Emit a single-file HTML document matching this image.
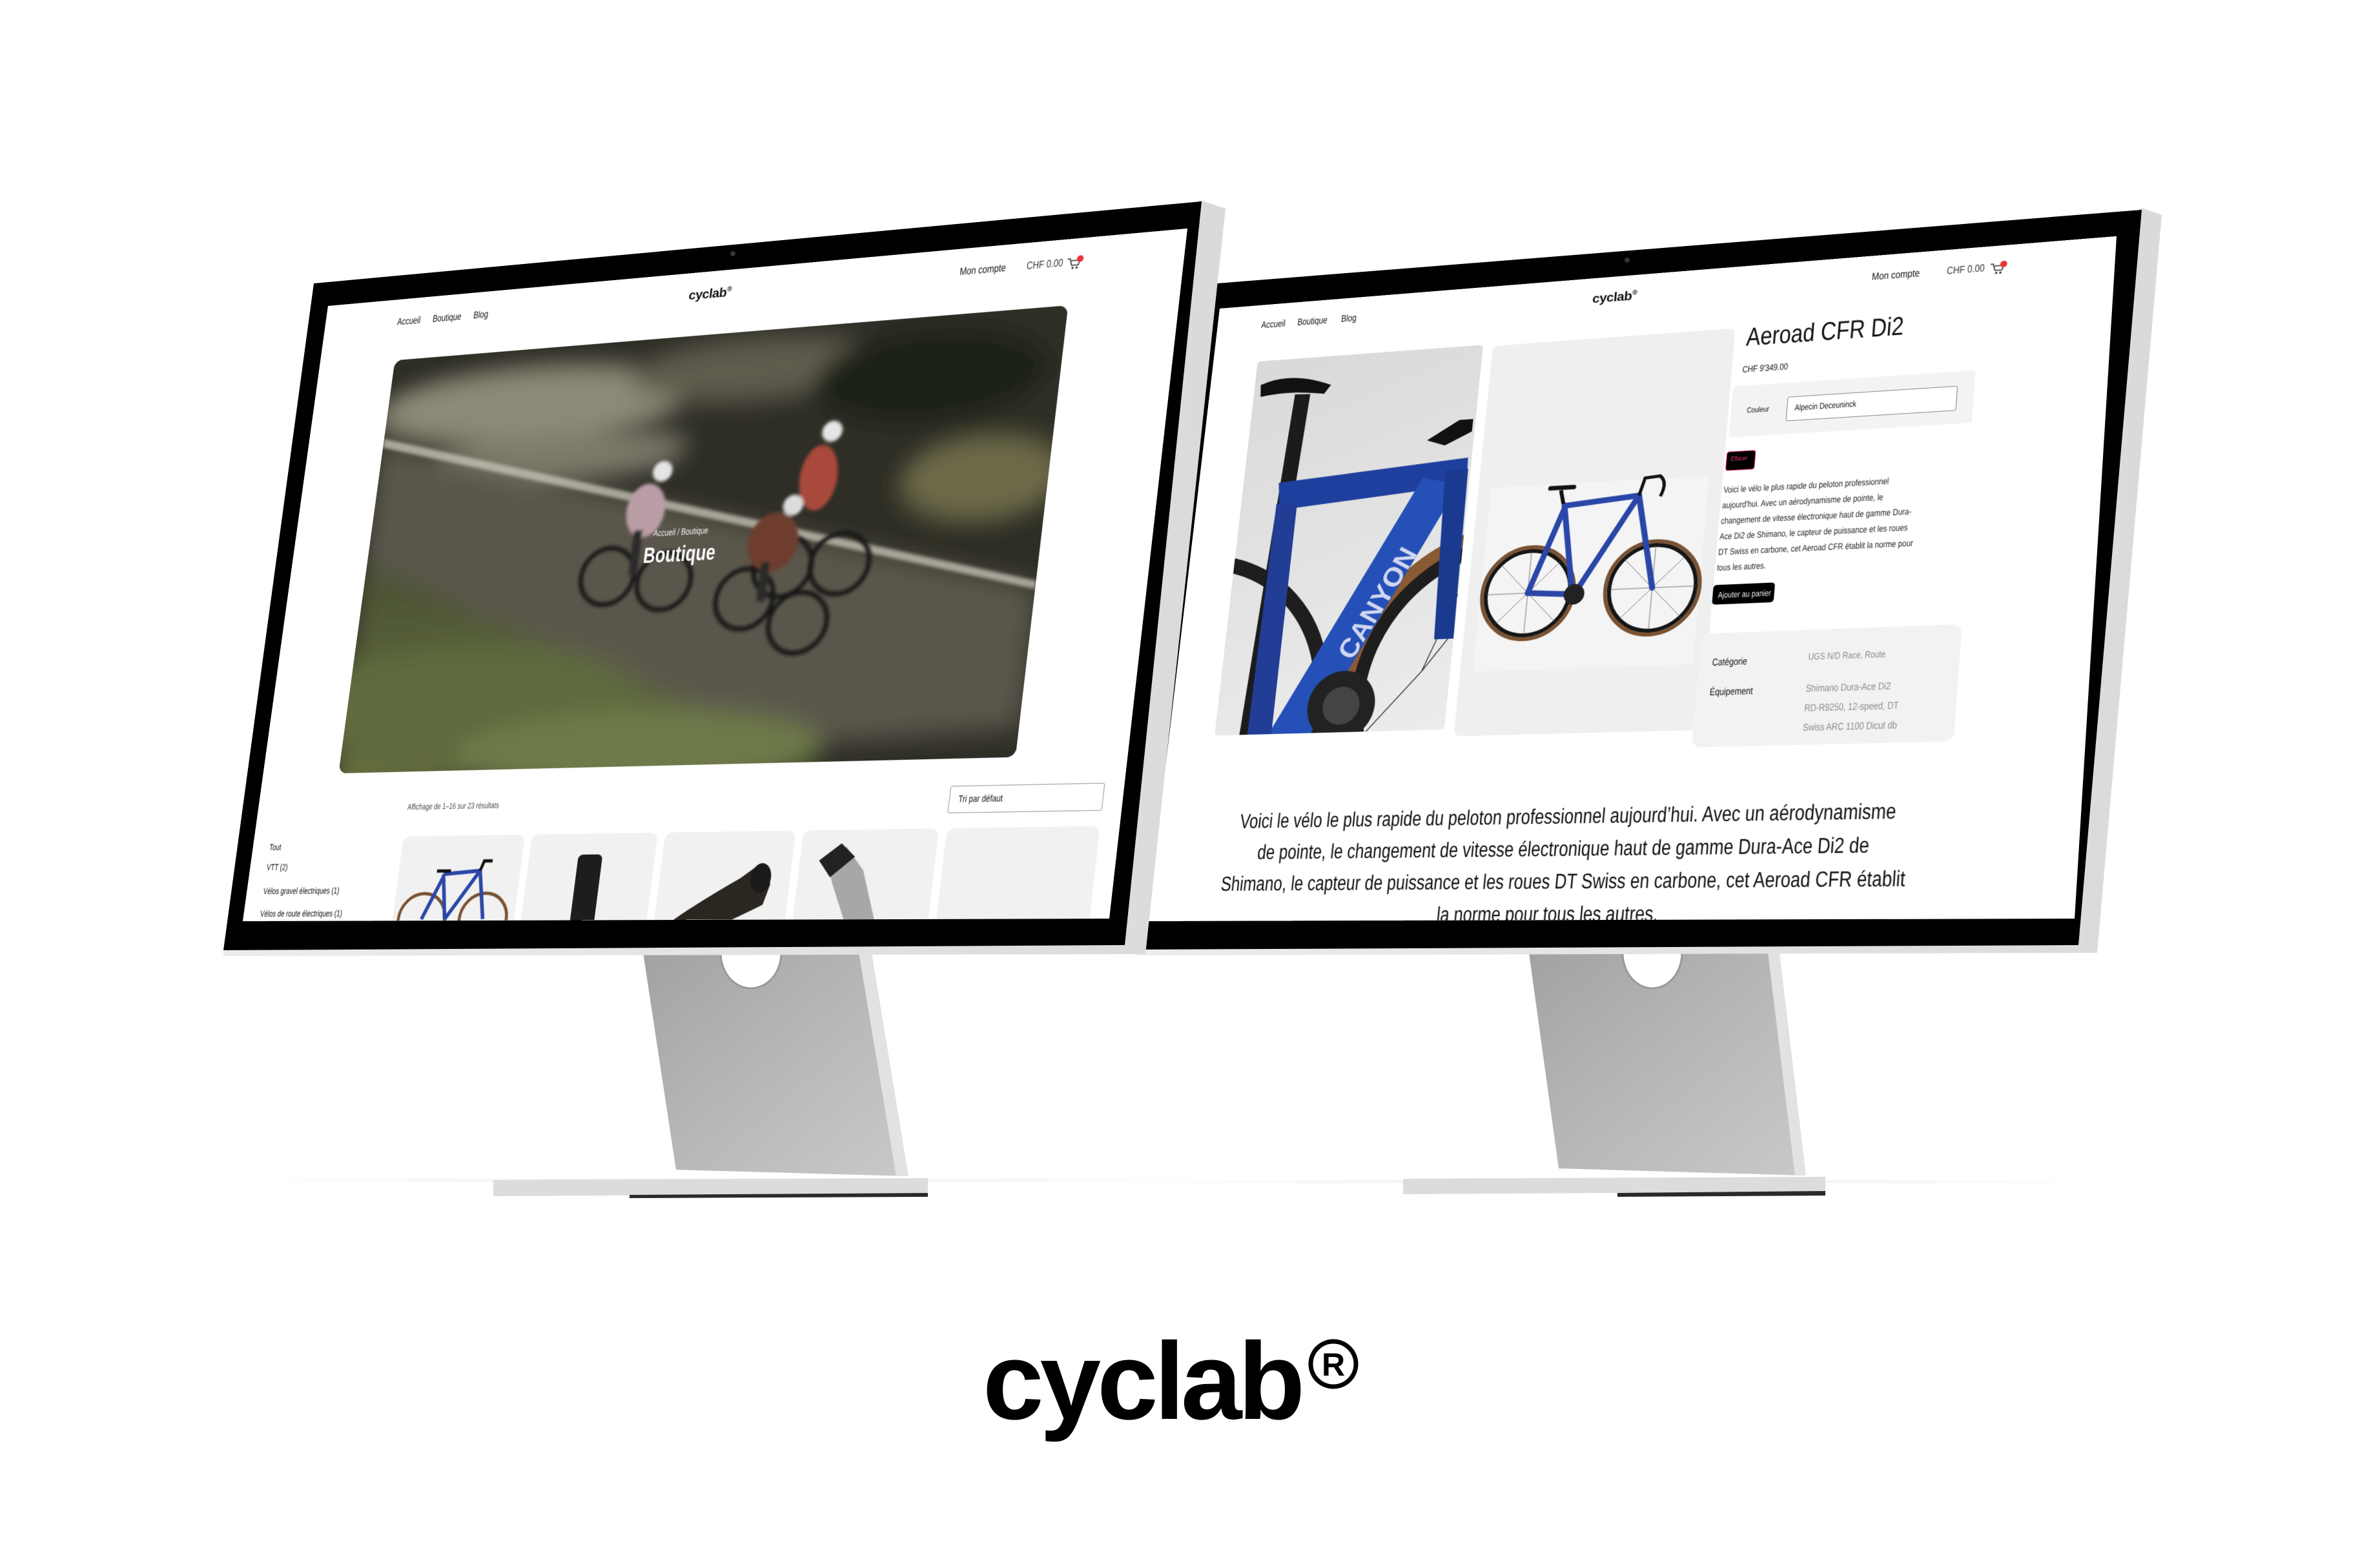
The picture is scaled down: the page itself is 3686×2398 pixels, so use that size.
<!DOCTYPE html>
<html><head><meta charset="utf-8">
<style>
html,body{margin:0;padding:0;background:#fff;}
body{width:3686px;height:2398px;position:relative;overflow:hidden;font-family:"Liberation Sans",sans-serif;}
.abs{position:absolute;}
.scr{position:absolute;left:0;top:0;width:1400px;height:1000px;background:#fff;overflow:hidden;transform-origin:0 0;color:#111;}
.scr div,.scr span{position:absolute;white-space:nowrap;}
.n{transform:scaleX(0.8);transform-origin:0 0;}
.logo{font-family:"Liberation Sans",sans-serif;font-weight:700;font-size:21px;letter-spacing:-0.5px;}
.logo sup{font-size:11px;}
.nav{font-size:16px;}
.card{background:#f1f1f1;border-radius:12px;overflow:hidden;}
</style></head><body>

<svg class="abs" style="left:0;top:0" width="3686" height="2398" viewBox="0 0 3686 2398">
 <defs>
  <linearGradient id="neck" x1="0" y1="0" x2="1" y2="1">
   <stop offset="0" stop-color="#a2a2a2"/><stop offset="0.5" stop-color="#b7b7b7"/><stop offset="1" stop-color="#c9c9c9"/>
  </linearGradient>
  <linearGradient id="sil" x1="0" y1="0" x2="1" y2="0">
   <stop offset="0" stop-color="#ececec"/><stop offset="1" stop-color="#dadada"/>
  </linearGradient>
  <linearGradient id="shd" x1="0" y1="0" x2="1" y2="0">
   <stop offset="0" stop-color="#fff"/><stop offset="0.5" stop-color="#ececec"/><stop offset="1" stop-color="#fff"/>
  </linearGradient>
 </defs>
 <rect x="380" y="1826" width="1500" height="5" fill="url(#shd)"/>
 <rect x="1750" y="1828" width="1500" height="5" fill="url(#shd)"/>
 <polygon points="764,1828 1437,1825 1437,1849 764,1853" fill="#dcdcdc"/>
 <polygon points="975,1851 1437,1848 1437,1854 975,1856" fill="#2a2a2a"/>
 <polygon points="996,1476 1348,1476 1405,1822 1047,1812" fill="url(#neck)"/>
 <polygon points="1330,1476 1350,1476 1407,1822 1388,1822" fill="#e2e2e2"/>
 <path d="M1116,1476 A47,55 0 0 0 1210,1476 Z" fill="#fff" stroke="#9a9a9a" stroke-width="3"/>
 <polygon points="2173,1826 2827,1823 2827,1846 2173,1850" fill="#dcdcdc"/>
 <polygon points="2505,1848 2827,1845 2827,1852 2505,1854" fill="#2a2a2a"/>
 <polygon points="2368,1476 2754,1476 2795,1821 2414,1810" fill="url(#neck)"/>
 <polygon points="2738,1476 2756,1476 2797,1821 2780,1821" fill="#e2e2e2"/>
 <path d="M2513,1476 A46,55 0 0 0 2605,1476 Z" fill="#fff" stroke="#9a9a9a" stroke-width="3"/>
 <polygon points="3317,322 3348,333 3248,1476 1760,1480 1760,1470" fill="url(#sil)"/>
 <polygon points="1860,441 3317,325 3219,1464 1760,1471" fill="#000"/>
 <polygon points="1889,478 3278,366 3213,1423 1777,1427" fill="#fff"/>
 <circle cx="2520" cy="403" r="4" fill="#333"/>
</svg>

<div id="s2" class="scr">
 <div class="logo" style="left:622px;top:22px;">cyclab<sup>®</sup></div>
 <div class="nav n" style="left:76px;top:26px;">Accueil</div>
 <div class="nav n" style="left:138px;top:26px;">Boutique</div>
 <div class="nav n" style="left:212px;top:26px;">Blog</div>
 <div class="nav n" style="left:1050px;top:25px;">Mon compte</div>
 <div class="nav n" style="left:1160px;top:25px;color:#333;">CHF 0.00</div>
 <svg style="position:absolute;left:1222px;top:24px" width="26" height="24" viewBox="0 0 26 24"><path d="M1 4h4l3 10h10l2-7H7" fill="none" stroke="#333" stroke-width="1.6"/><circle cx="10" cy="18" r="1.7" fill="#333"/><circle cx="16" cy="18" r="1.7" fill="#333"/><circle cx="20" cy="5" r="5" fill="#e5343a"/></svg>

 <div style="left:77px;top:95px;width:376px;height:612px;background:linear-gradient(160deg,#d9d9d9,#ececec);border-radius:6px;overflow:hidden;">
  <svg width="376" height="612" viewBox="0 0 376 612">
   <circle cx="470" cy="560" r="260" fill="none" stroke="#8a5a35" stroke-width="22"/>
   <circle cx="470" cy="560" r="240" fill="none" stroke="#1e1e1e" stroke-width="22"/>
   <circle cx="-60" cy="560" r="230" fill="none" stroke="#1e1e1e" stroke-width="24"/>
   <g stroke="#333" stroke-width="1.5"><line x1="330" y1="520" x2="470" y2="330"/><line x1="330" y1="520" x2="250" y2="612"/><line x1="330" y1="520" x2="376" y2="400"/></g>
   <rect x="58" y="60" width="26" height="560" fill="#1b1b1b" transform="rotate(3 70 300)"/>
   <path d="M10 40 Q60 20 130 48 L120 62 Q60 52 12 60 Z" fill="#111"/>
   <polygon points="60,205 370,182 372,225 66,250" fill="#1f3f9e"/>
   <polygon points="300,210 360,225 160,612 90,612" fill="#2450b8"/>
   <polygon points="335,200 372,200 376,470 345,470" fill="#1a3a90"/>
   <polygon points="60,240 95,240 95,612 55,612" fill="#223d96"/>
   <path d="M300 150 L350 120 L372 120 L372 140 L330 160 Z" fill="#111"/>
   <text x="0" y="0" transform="translate(215,500) rotate(-62)" font-family="Liberation Sans" font-weight="700" font-size="44" fill="#cfd6ef">CANYON</text>
   <circle cx="205" cy="570" r="55" fill="#222"/>
   <circle cx="205" cy="570" r="30" fill="#444"/>
  </svg>
 </div>
 <div style="left:469px;top:98px;width:381px;height:620px;background:#efefef;border-radius:10px;overflow:hidden;">
  <svg width="381" height="620" viewBox="0 0 381 620">
   <rect x="20" y="230" width="340" height="290" fill="#f4f4f4"/>
   <g fill="none">
    <circle cx="95" cy="400" r="72" stroke="#7a5232" stroke-width="6"/><circle cx="95" cy="400" r="66" stroke="#151515" stroke-width="6"/>
    <circle cx="288" cy="400" r="72" stroke="#7a5232" stroke-width="6"/><circle cx="288" cy="400" r="66" stroke="#151515" stroke-width="6"/>
    <g stroke="#555" stroke-width="0.8">
     <line x1="95" y1="334" x2="95" y2="466"/><line x1="29" y1="400" x2="161" y2="400"/><line x1="48" y1="353" x2="142" y2="447"/><line x1="142" y1="353" x2="48" y2="447"/>
     <line x1="288" y1="334" x2="288" y2="466"/><line x1="222" y1="400" x2="354" y2="400"/><line x1="241" y1="353" x2="335" y2="447"/><line x1="335" y1="353" x2="241" y2="447"/>
    </g>
    <g stroke="#2a46a8" stroke-width="9" stroke-linecap="round">
     <line x1="165" y1="405" x2="140" y2="265"/><line x1="140" y1="265" x2="255" y2="255"/><line x1="255" y1="255" x2="168" y2="405"/>
     <line x1="168" y1="405" x2="95" y2="400"/><line x1="140" y1="270" x2="95" y2="400"/><line x1="255" y1="255" x2="288" y2="400"/>
    </g>
    <path d="M138 262 L132 240" stroke="#111" stroke-width="6"/>
    <path d="M115 236 L152 236" stroke="#111" stroke-width="7" stroke-linecap="round"/>
    <path d="M255 255 L262 228 L285 226 Q298 236 288 258" stroke="#111" stroke-width="5"/>
   </g>
   <circle cx="168" cy="405" r="16" fill="#222"/>
  </svg>
 </div>
 <div class="n" style="left:868px;top:92px;font-size:40px;">Aeroad CFR Di2</div>
 <div class="n" style="left:866px;top:156px;font-size:14px;">CHF 9'349.00</div>
 <div style="left:854px;top:190px;width:358px;height:80px;background:#f3f3f3;border-radius:4px;"></div>
 <div class="n" style="left:878px;top:222px;font-size:12px;">Couleur</div>
 <div style="left:938px;top:212px;width:248px;height:36px;background:#fff;border:1.5px solid #888;border-radius:3px;"></div>
 <div class="n" style="left:950px;top:222px;font-size:13px;">Alpecin Deceuninck</div>
 <div style="left:853px;top:292px;width:42px;height:28px;background:#000;border:1.5px solid #e8336b;border-radius:4px;"></div>
 <div class="n" style="left:860px;top:299px;font-size:10px;color:#e8336b;">Effacer</div>
 <div class="n" style="left:853px;top:340px;font-size:13.5px;line-height:24px;color:#222;">Voici le vélo le plus rapide du peloton professionnel<br>aujourd'hui. Avec un aérodynamisme de pointe, le<br>changement de vitesse électronique haut de gamme Dura-<br>Ace Di2 de Shimano, le capteur de puissance et les roues<br>DT Swiss en carbone, cet Aeroad CFR établit la norme pour<br>tous les autres.</div>
 <div style="left:850px;top:498px;width:92px;height:30px;background:#000;border-radius:5px;"></div>
 <div class="n" style="left:858px;top:506px;font-size:13px;color:#fff;">Ajouter au panier</div>
 <div style="left:838px;top:572px;width:380px;height:172px;background:#f2f2f2;border-radius:14px;"></div>
 <div class="n" style="left:858px;top:608px;font-size:15px;">Catégorie</div>
 <div class="n" style="left:1000px;top:604px;font-size:14px;color:#888;">UGS N/D Race, Route</div>
 <div class="n" style="left:858px;top:653px;font-size:15px;">Équipement</div>
 <div class="n" style="left:1000px;top:646px;font-size:15px;line-height:29px;color:#888;">Shimano Dura-Ace Di2<br>RD-R9250, 12-speed, DT<br>Swiss ARC 1100 Dicut db</div>
 <div style="left:-60px;top:820px;width:1400px;white-space:nowrap;text-align:center;font-size:32px;line-height:49px;transform:scaleX(0.8);transform-origin:700px 0;">Voici le vélo le plus rapide du peloton professionnel aujourd’hui. Avec un aérodynamisme<br>de pointe, le changement de vitesse électronique haut de gamme Dura-Ace Di2 de<br>Shimano, le capteur de puissance et les roues DT Swiss en carbone, cet Aeroad CFR établit<br>la norme pour tous les autres.</div>
</div>

<svg class="abs" style="left:0;top:0" width="3686" height="2398" viewBox="0 0 3686 2398">
 <polygon points="1858,310 1898,323 1774,1478 346,1481 346,1470" fill="url(#sil)"/>
 <polygon points="486,439 1861,312 1742,1464 346,1472" fill="#000"/>
 <polygon points="508,474 1839,354 1718,1423 376,1427" fill="#fff"/>
 <circle cx="1135" cy="393" r="4" fill="#333"/>
</svg>

<div id="s1" class="scr">
 <div class="logo" style="left:632px;top:24px;">cyclab<sup>®</sup></div>
 <div class="nav n" style="left:131px;top:29px;">Accueil</div>
 <div class="nav n" style="left:194px;top:29px;">Boutique</div>
 <div class="nav n" style="left:266px;top:29px;">Blog</div>
 <div class="nav n" style="left:1064px;top:27px;">Mon compte</div>
 <div class="nav n" style="left:1166px;top:27px;color:#333;">CHF 0.00</div>
 <svg style="position:absolute;left:1226px;top:26px" width="26" height="24" viewBox="0 0 26 24"><path d="M1 4h4l3 10h10l2-7H7" fill="none" stroke="#333" stroke-width="1.6"/><circle cx="10" cy="18" r="1.7" fill="#333"/><circle cx="16" cy="18" r="1.7" fill="#333"/><circle cx="20" cy="5" r="5" fill="#e5343a"/></svg>

 <div style="left:136px;top:100px;width:1100px;height:666px;border-radius:14px;overflow:hidden;background:#3a3a2d;">
  <svg width="1100" height="666" viewBox="0 0 1100 666">
   <defs>
    <filter id="b1" x="-20%" y="-20%" width="140%" height="140%"><feGaussianBlur stdDeviation="18"/></filter>
    <filter id="b2"><feGaussianBlur stdDeviation="2.5"/></filter>
    <linearGradient id="gr" x1="0" y1="0" x2="0" y2="1"><stop offset="0" stop-color="#4b5234"/><stop offset="1" stop-color="#66703f"/></linearGradient>
   </defs>
   <g filter="url(#b1)">
    <rect x="-50" y="-50" width="1200" height="780" fill="#2f2f25"/>
    <ellipse cx="250" cy="90" rx="260" ry="55" fill="#8e8a78"/>
    <ellipse cx="620" cy="60" rx="200" ry="45" fill="#5f5c4d"/>
    <ellipse cx="300" cy="175" rx="220" ry="35" fill="#7d7a6a"/>
    <ellipse cx="900" cy="90" rx="180" ry="70" fill="#1f2118"/>
    <ellipse cx="1000" cy="250" rx="120" ry="60" fill="#6d6a48"/>
    <polygon points="0,140 1100,420 1100,620 700,640 0,360" fill="#5a574c"/>
    <polygon points="0,330 700,620 0,700" fill="url(#gr)"/>
    <ellipse cx="200" cy="560" rx="300" ry="90" fill="#5f6a3c"/>
    <ellipse cx="500" cy="640" rx="300" ry="60" fill="#6e7a48"/>
   </g>
   <polygon points="0,128 1100,408 1100,420 0,142" fill="#c9c6b9" opacity="0.75" filter="url(#b2)"/>
   <g filter="url(#b2)">
    <g fill="none" stroke="#151515" stroke-width="7">
     <circle cx="420" cy="370" r="44"/><circle cx="515" cy="382" r="44"/>
     <circle cx="705" cy="368" r="46"/><circle cx="795" cy="368" r="46"/>
     <circle cx="650" cy="415" r="46"/><circle cx="740" cy="455" r="46"/>
    </g>
    <ellipse cx="470" cy="270" rx="32" ry="42" fill="#b99ea6"/>
    <circle cx="490" cy="210" r="16" fill="#e5e5e5"/>
    <ellipse cx="745" cy="235" rx="30" ry="50" fill="#a8483b"/>
    <circle cx="758" cy="165" r="16" fill="#e5e5e5"/>
    <ellipse cx="685" cy="330" rx="40" ry="45" fill="#6e3c2e"/>
    <circle cx="710" cy="275" r="16" fill="#dcdcdc"/>
    <rect x="455" y="300" width="14" height="70" fill="#2a2a2a"/>
    <rect x="670" y="360" width="14" height="60" fill="#2a2a2a"/>
   </g>
  </svg>
  <div class="n" style="left:488px;top:298px;font-size:14px;color:#fff;">Accueil / Boutique</div>
  <div class="n" style="left:476px;top:322px;font-size:34px;font-weight:700;color:#fff;">Boutique</div>
 </div>

 <div class="n" style="left:266px;top:814px;font-size:13px;color:#444;">Affichage de 1–16 sur 23 résultats</div>
 <div style="left:1144px;top:806px;width:226px;height:38px;border:1.5px solid #999;border-radius:3px;"></div>
 <div class="n" style="left:1158px;top:817px;font-size:14px;">Tri par défaut</div>

 <div class="n" style="left:30px;top:874px;font-size:14px;">Tout</div>
 <div class="n" style="left:30px;top:906px;font-size:14px;">VTT (2)</div>
 <div class="n" style="left:30px;top:944px;font-size:14px;">Vélos gravel électriques (1)</div>
 <div class="n" style="left:30px;top:980px;font-size:14px;">Vélos de route électriques (1)</div>

 <div class="card" style="left:266px;top:868px;width:208px;height:200px;">
  <svg width="208" height="200" viewBox="0 0 208 200"><g fill="none"><circle cx="50" cy="130" r="40" stroke="#7a5232" stroke-width="5"/><circle cx="155" cy="130" r="40" stroke="#7a5232" stroke-width="5"/><g stroke="#2a46a8" stroke-width="6"><line x1="90" y1="130" x2="78" y2="60"/><line x1="78" y1="60" x2="140" y2="55"/><line x1="140" y1="55" x2="90" y2="130"/><line x1="140" y1="55" x2="155" y2="130"/><line x1="78" y1="65" x2="50" y2="130"/></g><path d="M66 55h24M140 55l5-15h14" stroke="#111" stroke-width="5"/></g></svg>
 </div>
 <div class="card" style="left:486px;top:868px;width:208px;height:200px;">
  <div style="left:82px;top:32px;width:40px;height:170px;background:#1d1d1d;border-radius:8px;"></div>
 </div>
 <div class="card" style="left:706px;top:868px;width:208px;height:200px;">
  <svg width="208" height="200" viewBox="0 0 208 200"><path d="M20 140 Q60 110 130 70 L150 55 Q175 55 178 80 L170 110 Q120 135 40 170 Z" fill="#2a2620"/><ellipse cx="162" cy="70" rx="16" ry="22" fill="#1a1a1a"/></svg>
 </div>
 <div class="card" style="left:926px;top:868px;width:208px;height:200px;">
  <svg width="208" height="200" viewBox="0 0 208 200"><path d="M40 40 L70 25 L100 60 L150 200 L110 200 L55 80 Z" fill="#9a9a9a" opacity="0.85"/><path d="M30 45 L62 20 L85 40 L50 70 Z" fill="#222"/></svg>
 </div>
 <div class="card" style="left:1146px;top:868px;width:226px;height:200px;"></div>
</div>

<div class="abs" style="left:1522px;top:2055px;font-family:'Liberation Sans',sans-serif;font-weight:700;font-size:170px;line-height:170px;letter-spacing:-6px;color:#000;">cyclab</div>
<svg class="abs" style="left:2020px;top:2066px" width="95" height="95" viewBox="0 0 95 95">
 <circle cx="45" cy="47" r="35" fill="none" stroke="#000" stroke-width="7"/>
 <text x="45" y="65" text-anchor="middle" font-family="Liberation Sans" font-weight="700" font-size="50" fill="#000">R</text>
</svg>

<script>
function hom(el,W,H,q){
 var x0=q[0],y0=q[1],x1=q[2],y1=q[3],x2=q[4],y2=q[5],x3=q[6],y3=q[7];
 var dx1=x1-x2,dx2=x3-x2,dx3=x0-x1+x2-x3,dy1=y1-y2,dy2=y3-y2,dy3=y0-y1+y2-y3;
 var den=dx1*dy2-dx2*dy1;
 var g=(dx3*dy2-dx2*dy3)/den,h=(dx1*dy3-dx3*dy1)/den;
 var a=x1-x0+g*x1,b=x3-x0+h*x3,c=x0,d=y1-y0+g*y1,e=y3-y0+h*y3,f=y0;
 el.style.transform='matrix3d('+[a/W,d/W,0,g/W,b/H,e/H,0,h/H,0,0,1,0,c,f,0,1].join(',')+')';
}
hom(document.getElementById('s1'),1400,1000,[508,474,1839,354,1718,1423,376,1427]);
hom(document.getElementById('s2'),1400,1000,[1889,478,3278,366,3213,1423,1777,1427]);
</script>
</body></html>
